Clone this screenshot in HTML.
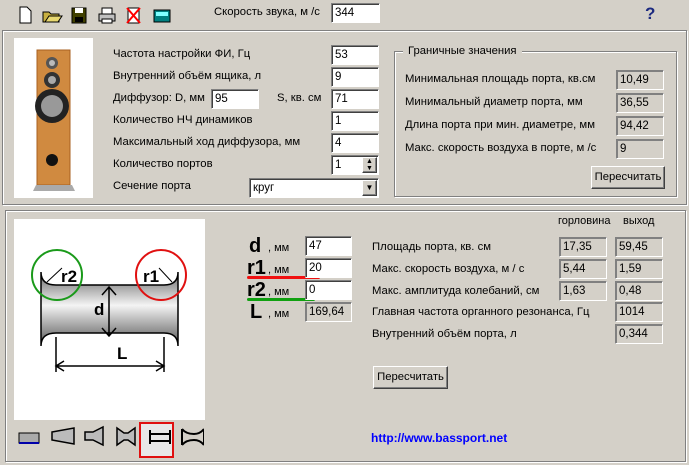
<!DOCTYPE html>
<html><head><meta charset="utf-8"><style>
body{margin:0;width:689px;height:465px;background:#d4d0c8;font-family:"Liberation Sans","DejaVu Sans",sans-serif;font-size:11.3px;color:#000;position:relative;overflow:hidden}
.a{position:absolute;white-space:nowrap}
.in{position:absolute;background:#fff;border-top:1px solid #808080;border-left:1px solid #808080;border-right:1px solid #fff;border-bottom:1px solid #fff;box-shadow:inset 1px 1px 0 #404040;box-sizing:border-box;padding:1px 0 0 3px;font-size:11.5px;height:20px;line-height:16px}
.ro{background:#d4d0c8;box-shadow:inset 1px 1px 0 #808080;border-color:#808080 #fff #fff #808080}
.panel{position:absolute;border:1px solid #808080;box-shadow:inset 1px 1px 0 #fff,1px 1px 0 #fff}
.btn{position:absolute;background:#d4d0c8;border:1px solid;border-color:#fff #404040 #404040 #fff;box-shadow:inset -1px -1px 0 #808080;box-sizing:border-box;text-align:center;line-height:20px}
.big{font-weight:bold;font-size:20px}
</style></head><body>
<svg class="a" style="left:14px;top:4px" width="160" height="22">
<path d="M6 3h7l4 4v12H6z" fill="#fff" stroke="#000"/>
<path d="M29 8h6l2 2h8v8H29z" fill="#c8b040" stroke="#000"/><path d="M31 18l4-6h13l-4 6z" fill="#e8d870" stroke="#000"/>
<rect x="58" y="4" width="14" height="15" fill="#404000" stroke="#000"/><rect x="61" y="4" width="8" height="5" fill="#fff"/><rect x="61" y="13" width="8" height="5" fill="#000"/>
<rect x="85" y="10" width="16" height="7" fill="#c0c0c0" stroke="#000"/><rect x="88" y="4" width="10" height="6" fill="#fff" stroke="#000"/><rect x="88" y="15" width="10" height="4" fill="#fff" stroke="#000"/>
<rect x="114" y="4" width="11" height="15" fill="#fff" stroke="#000"/><path d="M113 4l13 15M126 4l-13 15" stroke="#f00" stroke-width="2"/>
<rect x="140" y="6" width="16" height="12" fill="#008080" stroke="#000"/><rect x="142" y="8" width="12" height="4" fill="#80ffff"/>
</svg>
<div class="a" style="left:214px;top:6px">Скорость звука, м /с</div>
<div class="in" style="left:331px;top:3px;width:49px">344</div>
<div class="a" style="left:645px;top:4px;font-weight:bold;font-size:17px;color:#1c2a80">?</div>

<div class="panel" style="left:2px;top:30px;width:683px;height:173px"></div>
<div class="a" style="left:14px;top:38px;width:79px;height:160px;background:#fff">
<svg width="79" height="160"><rect x="23" y="12" width="33" height="135" fill="#d08a40" stroke="#a86020"/><circle cx="38" cy="25" r="6" fill="#555"/><circle cx="38" cy="25" r="3" fill="#bbb"/><circle cx="38" cy="42" r="8" fill="#333"/><circle cx="38" cy="42" r="4" fill="#aaa"/><circle cx="38" cy="68" r="17" fill="#222"/><circle cx="38" cy="68" r="11" fill="#999"/><circle cx="38" cy="122" r="6" fill="#111"/><path d="M22 147l-3 6h42l-3-6" fill="#aaa"/></svg></div>
<div class="a" style="left:113px;top:48px">Частота настройки ФИ, Гц</div>
<div class="a" style="left:113px;top:70px">Внутренний объём ящика, л</div>
<div class="a" style="left:113px;top:92px">Диффузор: D, мм</div>
<div class="a" style="left:277px;top:92px">S, кв. см</div>
<div class="a" style="left:113px;top:114px">Количество НЧ динамиков</div>
<div class="a" style="left:113px;top:136px">Максимальный ход диффузора, мм</div>
<div class="a" style="left:113px;top:158px">Количество портов</div>
<div class="a" style="left:113px;top:180px">Сечение порта</div>
<div class="in" style="left:331px;top:45px;width:48px">53</div>
<div class="in" style="left:331px;top:67px;width:48px">9</div>
<div class="in" style="left:211px;top:89px;width:48px">95</div>
<div class="in" style="left:331px;top:89px;width:48px">71</div>
<div class="in" style="left:331px;top:111px;width:48px">1</div>
<div class="in" style="left:331px;top:133px;width:48px">4</div>
<div class="in" style="left:331px;top:155px;width:48px">1</div>
<div class="btn" style="left:362px;top:157px;width:15px;height:16px;line-height:7px;font-size:7px">▲<br>▼</div>
<div class="in" style="left:249px;top:178px;width:130px">круг</div>
<div class="btn" style="left:362px;top:180px;width:15px;height:16px;line-height:14px;font-size:8px">▼</div>

<div class="panel" style="left:394px;top:51px;width:281px;height:144px"></div>
<div class="a" style="left:403px;top:45px;background:#d4d0c8;padding:0 5px">Граничные значения</div>
<div class="a" style="left:405px;top:73px">Минимальная площадь порта, кв.см</div>
<div class="a" style="left:405px;top:96px">Минимальный диаметр порта, мм</div>
<div class="a" style="left:405px;top:119px">Длина порта при мин. диаметре, мм</div>
<div class="a" style="left:405px;top:142px">Макс. скорость воздуха в порте, м /с</div>
<div class="in ro" style="left:616px;top:70px;width:48px">10,49</div>
<div class="in ro" style="left:616px;top:93px;width:48px">36,55</div>
<div class="in ro" style="left:616px;top:116px;width:48px">94,42</div>
<div class="in ro" style="left:616px;top:139px;width:48px">9</div>
<div class="btn" style="left:591px;top:166px;width:74px;height:23px">Пересчитать</div>

<div class="panel" style="left:5px;top:210px;width:679px;height:250px"></div>
<div class="a" style="left:14px;top:219px;width:191px;height:201px;background:#fff">
<svg width="191" height="201">
<defs><linearGradient id="g" x1="0" y1="0" x2="0" y2="1"><stop offset="0" stop-color="#666"/><stop offset="0.45" stop-color="#f4f4f4"/><stop offset="1" stop-color="#555"/></linearGradient></defs>
<path d="M27 53 Q27 66 42 66 H150 Q164 66 164 53 V127 Q164 114 150 114 H42 Q27 114 27 127 Z" fill="url(#g)" stroke="#000" stroke-width="1.5"/>
<circle cx="43" cy="56" r="25" fill="none" stroke="#1a9a1a" stroke-width="2"/>
<circle cx="147" cy="56" r="25" fill="none" stroke="#e01010" stroke-width="2"/>
<text x="47" y="63" font-size="17" font-weight="bold" font-family="Liberation Sans">r2</text>
<text x="129" y="63" font-size="17" font-weight="bold" font-family="Liberation Sans">r1</text>
<path d="M48 49 L33 63M145 49L158 63" stroke="#000"/>
<text x="80" y="96" font-size="17" font-weight="bold" font-family="Liberation Sans">d</text>
<path d="M95 68V117M88 76l7-8 7 8M88 109l7 8 7-8" stroke="#000" fill="none" stroke-width="1.5"/>
<path d="M42 118V153M150 118V153M42 147H150M50 142l-8 5 8 5M142 142l8 5-8 5" stroke="#000" fill="none" stroke-width="1.5"/>
<text x="103" y="140" font-size="17" font-weight="bold" font-family="Liberation Sans">L</text>
</svg></div>
<svg class="a" style="left:14px;top:420px" width="190" height="40">
<rect x="126" y="3" width="33" height="34" fill="#e8e8e8" stroke="#e01010" stroke-width="2"/>
<rect x="5" y="13" width="20" height="10" fill="#aaa" stroke="#000"/><path d="M5 23h20" stroke="#00a" stroke-width="2"/>
<path d="M38 12l22-4v16l-22-4z" fill="#bbb" stroke="#000" stroke-width="1.5"/>
<path d="M71 12h8l10-5v18l-10-5h-8z" fill="#bbb" stroke="#000" stroke-width="1.5"/>
<path d="M103 8l7 5h4l7-5v17l-7-5h-4l-7 5z" fill="#bbb" stroke="#000" stroke-width="1.5"/>
<path d="M136 10v14M156 10v14M136 14h20M136 21h20" stroke="#000" stroke-width="2" fill="none"/>
<path d="M168 9q4 5 12 5q6 0 10-5M168 25q4-5 12-5q6 0 10 5M168 9v16M190 9v16" stroke="#000" stroke-width="2" fill="none"/>
</svg>
<div class="a big" style="left:249px;top:235px">d</div><div class="a" style="left:268px;top:242px;font-size:11px">, мм</div>
<div class="a big" style="left:247px;top:257px">r1</div><div class="a" style="left:268px;top:264px;font-size:11px">, мм</div>
<div class="a big" style="left:247px;top:279px">r2</div><div class="a" style="left:268px;top:286px;font-size:11px">, мм</div>
<div class="a big" style="left:250px;top:301px">L</div><div class="a" style="left:268px;top:308px;font-size:11px">, мм</div>
<div class="a" style="left:247px;top:276px;width:73px;height:3px;background:#f01010;border-radius:2px"></div>
<div class="a" style="left:247px;top:298px;width:68px;height:3px;background:#10a010;border-radius:2px"></div>
<div class="in" style="left:305px;top:236px;width:47px">47</div>
<div class="in" style="left:305px;top:258px;width:47px">20</div>
<div class="in" style="left:305px;top:280px;width:47px">0</div>
<div class="in ro" style="left:305px;top:302px;width:47px">169,64</div>
<div class="a" style="left:558px;top:215px;font-size:11px">горловина</div>
<div class="a" style="left:623px;top:215px;font-size:11px">выход</div>
<div class="a" style="left:372px;top:241px">Площадь порта, кв. см</div>
<div class="a" style="left:372px;top:263px">Макс. скорость воздуха, м / с</div>
<div class="a" style="left:372px;top:285px">Макс. амплитуда колебаний, см</div>
<div class="a" style="left:372px;top:306px">Главная частота органного резонанса, Гц</div>
<div class="a" style="left:372px;top:328px">Внутренний объём порта, л</div>
<div class="in ro" style="left:559px;top:237px;width:48px">17,35</div>
<div class="in ro" style="left:615px;top:237px;width:48px">59,45</div>
<div class="in ro" style="left:559px;top:259px;width:48px">5,44</div>
<div class="in ro" style="left:615px;top:259px;width:48px">1,59</div>
<div class="in ro" style="left:559px;top:281px;width:48px">1,63</div>
<div class="in ro" style="left:615px;top:281px;width:48px">0,48</div>
<div class="in ro" style="left:615px;top:302px;width:48px">1014</div>
<div class="in ro" style="left:615px;top:324px;width:48px">0,344</div>
<div class="btn" style="left:373px;top:366px;width:75px;height:23px">Пересчитать</div>
<div class="a" style="left:371px;top:431px;color:#0000ff;font-weight:bold;font-size:12px">http://www.bassport.net</div>
</body></html>
